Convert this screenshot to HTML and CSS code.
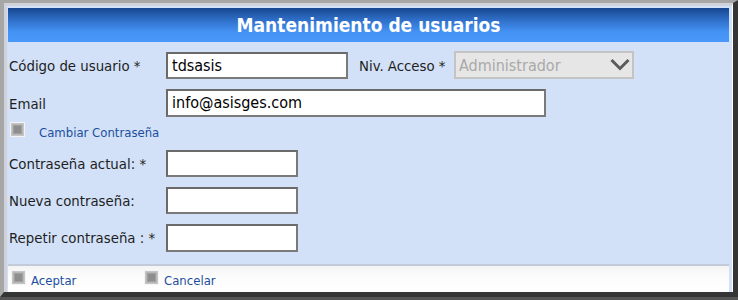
FILE: index.html
```html
<!DOCTYPE html>
<html lang="es">
<head>
<meta charset="utf-8">
<title>Mantenimiento de usuarios</title>
<link rel="stylesheet" href="styles.css">
</head>
<body>
<div class="frame">
  <div class="inner">
    <div class="panel">
      <div class="header">Mantenimiento de usuarios</div>
      <div class="form">
        <div class="row row1">
          <label class="lbl">Código de usuario *</label>
          <div class="input w-code">tdsasis</div>
          <label class="lbl lbl-niv">Niv. Acceso *</label>
          <div class="select">
            <span>Administrador</span>
            <svg class="chev" width="20" height="13" viewBox="0 0 20 13"><path d="M1.5 2 L10 10.5 L18.5 2" fill="none" stroke="#5a5a5a" stroke-width="3"/></svg>
          </div>
        </div>
        <div class="row row2">
          <label class="lbl">Email</label>
          <div class="input w-email">info@asisges.com</div>
        </div>
        <div class="row-check">
          <svg class="cb" width="15" height="15" viewBox="0 0 15 15"><rect x="0.5" y="0.5" width="14" height="14" fill="#c4c4c4" stroke="#f4f4f4"/><rect x="2" y="2" width="11" height="11" fill="#b8b8b8"/><rect x="3.5" y="3.5" width="8" height="8" fill="#8e8e8e" stroke="#a0a0a0"/></svg>
          <a class="link link-cambiar">Cambiar Contraseña</a>
        </div>
        <div class="row row-pw first">
          <label class="lbl">Contraseña actual: *</label>
          <div class="input w-pw"></div>
        </div>
        <div class="row row-pw">
          <label class="lbl">Nueva contraseña:</label>
          <div class="input w-pw"></div>
        </div>
        <div class="row row-pw last">
          <label class="lbl">Repetir contraseña : *</label>
          <div class="input w-pw"></div>
        </div>
      </div>
      <div class="footer">
        <div class="btn btn-ok">
          <svg class="cb" width="15" height="15" viewBox="0 0 15 15"><rect x="0.5" y="0.5" width="14" height="14" fill="#c4c4c4" stroke="#f4f4f4"/><rect x="2" y="2" width="11" height="11" fill="#b8b8b8"/><rect x="3.5" y="3.5" width="8" height="8" fill="#8e8e8e" stroke="#a0a0a0"/></svg>
          <a class="link">Aceptar</a>
        </div>
        <div class="btn">
          <svg class="cb" width="15" height="15" viewBox="0 0 15 15"><rect x="0.5" y="0.5" width="14" height="14" fill="#c4c4c4" stroke="#f4f4f4"/><rect x="2" y="2" width="11" height="11" fill="#b8b8b8"/><rect x="3.5" y="3.5" width="8" height="8" fill="#8e8e8e" stroke="#a0a0a0"/></svg>
          <a class="link">Cancelar</a>
        </div>
      </div>
    </div>
  </div>
</div>
</body>
</html>
```
FILE: styles.css
```css
html, body {
  margin: 0;
  padding: 0;
}
body {
  width: 738px;
  height: 300px;
  background: #555555;
  overflow: hidden;
  font-family: "DejaVu Sans Condensed", "DejaVu Sans", sans-serif;
}
.frame {
  box-sizing: border-box;
  width: 738px;
  height: 297px;
  border-top: 3px solid #a6a6a6;
  border-left: 4px solid #a6a6a6;
  border-right: 5px solid #353535;
  border-bottom: 5px solid #353535;
  background: #a6a6a6;
}
.inner {
  box-sizing: border-box;
  height: 100%;
  border-top: 3px solid #cfd3d9;
  border-left: 3px solid #cfd3d9;
  border-right: 1px solid #ffffff;
  background: #d2e1f7;
}
.panel {
  box-sizing: border-box;
  height: 100%;
  padding: 2px 3px 0 1px;
  display: flex;
  flex-direction: column;
}
.header {
  height: 34px;
  background: linear-gradient(to bottom, #17468f 0%, #2f6fc8 35%, #4492f4 70%, #4a97fa 100%);
  color: #ffffff;
  font-weight: bold;
  font-size: 19px;
  line-height: 34px;
  text-align: center;
}
.form {
  flex: 1;
  padding-left: 1px;
}
.row {
  display: flex;
  align-items: center;
}
.row1 {
  margin-top: 9px;
  height: 28px;
}
.row2 {
  margin-top: 10px;
  height: 28px;
}
.row-check {
  display: flex;
  align-items: flex-start;
  margin-top: 5px;
  height: 15px;
}
.row-pw {
  height: 27px;
  margin-top: 10px;
}
.row-pw.first {
  margin-top: 13px;
}
.lbl {
  width: 157px;
  font-size: 14.8px;
  color: #1e1e1e;
}
.lbl-niv {
  width: 95px;
  margin-left: 11px;
}
.input {
  box-sizing: border-box;
  height: 27px;
  background: #ffffff;
  border: 2px solid #6a6a6a;
  border-right-color: #7a7a7a;
  border-bottom-color: #7a7a7a;
  font-size: 16px;
  line-height: 23px;
  padding-left: 4px;
  color: #000;
}
.row2 .input {
  height: 28px;
  line-height: 24px;
}
.w-code { width: 182px; }
.w-email { width: 380px; }
.w-pw { width: 132px; }
.row-pw.last .input { height: 28px; }
.select {
  box-sizing: border-box;
  width: 180px;
  height: 28px;
  background: #e6e6e6;
  border: 2px solid #c4c4c4;
  display: flex;
  align-items: center;
  justify-content: space-between;
  padding-left: 3px;
  padding-right: 2px;
  font-size: 16px;
  color: #a9a9a9;
}
.chev {
  display: block;
  margin-top: -2px;
}
.cb {
  display: block;
  margin-left: 1px;
  flex: none;
}
.link {
  color: #1d4f9e;
  font-size: 13px;
  line-height: 15px;
  text-decoration: none;
  cursor: pointer;
  padding-top: 3px;
}
.link-cambiar {
  margin-left: 14px;
}
.footer {
  height: 28px;
  border-top: 2px solid #c3cbd8;
  background: linear-gradient(to bottom, #f4f4f4 0%, #fcfcfc 40%, #ffffff 100%);
  display: flex;
  align-items: flex-start;
  padding-left: 2px;
  box-sizing: border-box;
  padding-top: 4px;
}
.btn {
  display: flex;
  align-items: flex-start;
  gap: 5px;
}
.btn-ok {
  width: 133px;
}
```
